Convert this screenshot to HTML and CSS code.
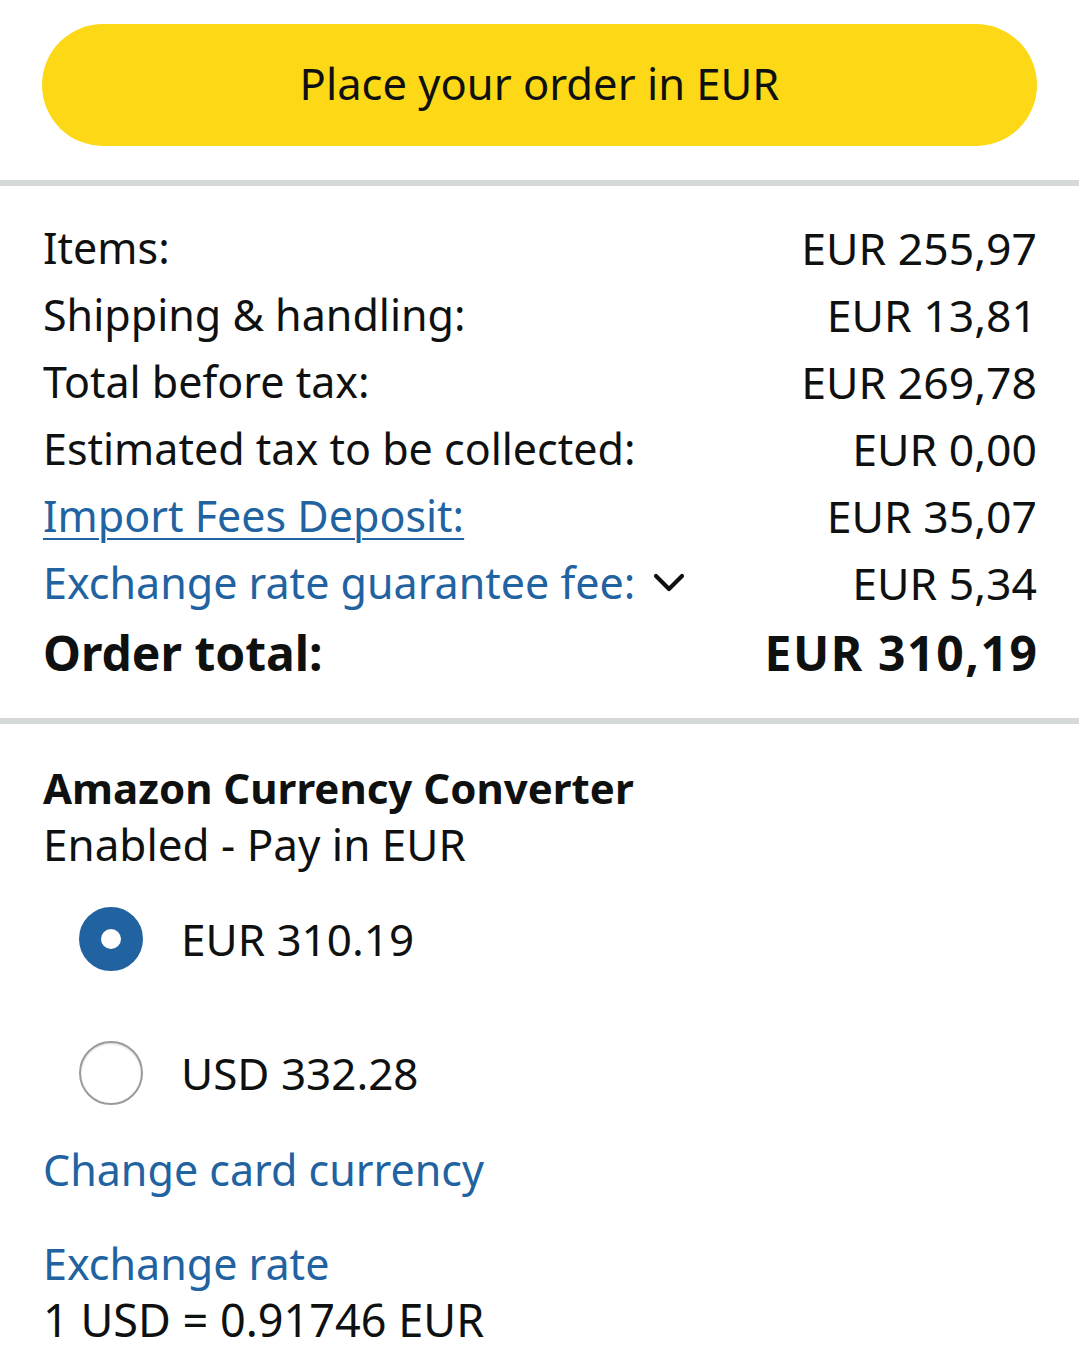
FILE: index.html
```html
<!DOCTYPE html>
<html lang="en">
<head>
<meta charset="utf-8">
<title>Checkout</title>
<link rel="stylesheet" href="styles.css">
</head>
<body>
<div class="btn-wrap">
  <button class="place-btn">Place your order in EUR</button>
</div>
<div class="divider"></div>
<section class="summary">
  <div class="row"><span>Items:</span><span class="val">EUR 255,97</span></div>
  <div class="row"><span>Shipping &amp; handling:</span><span class="val">EUR 13,81</span></div>
  <div class="row"><span>Total before tax:</span><span class="val">EUR 269,78</span></div>
  <div class="row"><span>Estimated tax to be collected:</span><span class="val">EUR 0,00</span></div>
  <div class="row"><a class="link underline" href="#">Import Fees Deposit:</a><span class="val">EUR 35,07</span></div>
  <div class="row"><span class="link fee">Exchange rate guarantee fee:<svg class="chev" viewBox="0 0 32 20" width="32" height="20"><path d="M3 3 L16 16 L29 3" fill="none" stroke="#0f1111" stroke-width="4.2" stroke-linecap="round" stroke-linejoin="round"/></svg></span><span class="val">EUR 5,34</span></div>
  <div class="row total"><span>Order total:</span><span class="total-val">EUR 310,19</span></div>
</section>
<div class="divider"></div>
<section class="converter">
  <h2 class="conv-title">Amazon Currency Converter</h2>
  <p class="conv-sub">Enabled - Pay in EUR</p>
  <div class="radio-row"><span class="radio selected"></span><span>EUR 310.19</span></div>
  <div class="radio-row"><span class="radio"></span><span>USD 332.28</span></div>
  <a class="link change" href="#">Change card currency</a>
  <div class="rate-title link">Exchange rate</div>
  <div class="rate">1 USD = 0.91746 EUR</div>
</section>
</body>
</html>
```
FILE: styles.css
```css
* { box-sizing: border-box; }
body {
  margin: 0;
  background: #ffffff;
  font-family: "Noto Sans", Roboto, sans-serif;
  color: #0f1111;
  font-size: 43px;
}
.btn-wrap {
  padding: 24px 42px 34px 42px;
}
.place-btn {
  display: block;
  width: 100%;
  height: 122px;
  border: none;
  border-radius: 61px;
  background: #fcd816;
  color: #0f1111;
  font-family: inherit;
  font-size: 43.5px;
  padding: 0 0 4px 0;
}
.divider {
  height: 6px;
  background: #d5d9d9;
}
.summary {
  padding: 28px 42px 30px 43px;
}
.row {
  display: flex;
  justify-content: space-between;
  align-items: center;
  height: 67px;
}
.val {
  font-size: 44.5px;
}
.row.total {
  height: 72px;
  font-weight: 700;
  font-size: 48px;
}
.total-val {
  letter-spacing: 1.6px;
  margin-right: -1.6px;
}
.link {
  color: #2162a1;
  text-decoration: none;
}
.underline {
  text-decoration: underline;
  text-decoration-thickness: 2px;
  text-underline-offset: 6px;
}
.fee {
  display: inline-flex;
  align-items: center;
}
.chev {
  margin-left: 18px;
}
.converter {
  padding: 36px 42px 0 43px;
}
.conv-title {
  margin: 0;
  font-size: 42px;
  font-weight: 700;
  line-height: 56px;
}
.conv-sub {
  margin: 0;
  font-size: 44px;
  line-height: 56px;
}
.radio-row {
  display: flex;
  align-items: center;
  height: 134px;
  padding-left: 36px;
  gap: 38px;
  font-size: 44px;
}
.radio {
  width: 64px;
  height: 64px;
  border-radius: 50%;
  border: 2px solid #9a9a9a;
  background: #fff;
  box-shadow: inset 0 1px 2px rgba(0,0,0,0.15);
  flex: none;
}
.radio.selected {
  border: 22px solid #2162a1;
  box-shadow: none;
}
.change {
  display: block;
  line-height: 60px;
}
.rate-title {
  margin-top: 36px;
  line-height: 56px;
}
.rate {
  font-size: 45px;
  line-height: 56px;
}
```
